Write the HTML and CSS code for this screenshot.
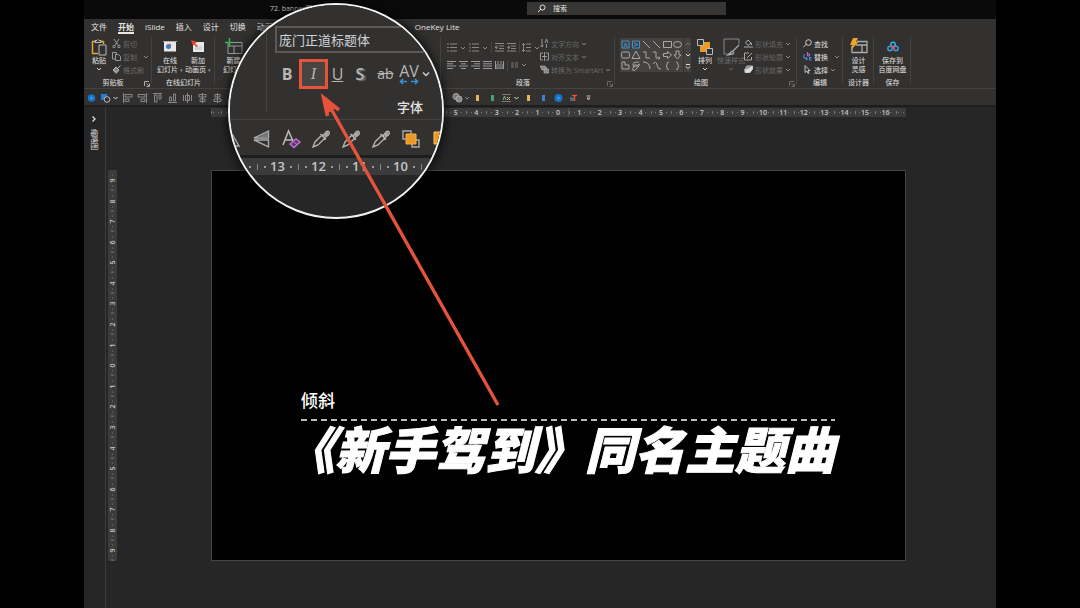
FILE: index.html
```html
<!DOCTYPE html>
<html lang="zh-CN">
<head>
    <meta charset="UTF-8">
    <title>72. banner图</title>
    <link rel="stylesheet" href="styles.css">
</head>
<body>
    <svg class="sprite" aria-hidden="true">
        <symbol id="chev" viewBox="0 0 6 4"><path d="M1 1l2 2 2-2" fill="none" stroke="currentColor"/></symbol>
        <symbol id="launch" viewBox="0 0 6 6"><path d="M.5 5V.5H5M2.500 2.500l2.500 2.500M5.500 2.500v3h-3" fill="none" stroke="currentColor" stroke-width=".8"/></symbol>
        <symbol id="pipette" viewBox="0 0 20 20"><path d="M2 18l2-5 7-7 3 3-7 7zM9.500 5l5.500 5.500M12 7l3-4q2-1.500 3 0t-.5 3L14 8.500" fill="none" stroke="#b4b2b0" stroke-width="1.400"/><path d="M13 6l3-3 2 1-3 4z" fill="#aaa"/></symbol>
        <symbol id="arrange" viewBox="0 0 20 20"><path d="M2 2h8v8H2zM11 11h7v7h-7z" fill="none" stroke="#aaa" stroke-width="1.400"/><path d="M5 5h10v10H5z" fill="#eb9a26" stroke="#f5b04a"/></symbol>
    </svg>

    <div class="app">
        <header class="titlebar">
            <span class="doc-name">72. banner图</span>
            <label class="search">
                <svg width="9" height="9" viewBox="0 0 9 9"><path d="M1 8l3-3" stroke="#ddd"/><circle cx="5.500" cy="3.500" r="2.500" fill="none" stroke="#ddd"/></svg>
                <input type="text" placeholder="搜索" aria-label="搜索">
            </label>
        </header>

        <nav class="tabs">
            <a href="#">文件</a>
            <a href="#" class="active">开始</a>
            <a href="#">iSlide</a>
            <a href="#">插入</a>
            <a href="#">设计</a>
            <a href="#">切换</a>
            <a href="#">动画</a>
            <a href="#" class="tab-onekey">OneKey Lite</a>
        </nav>

        <div class="ribbon">
            <section class="group g-clipboard">
                <div class="tools">
                    <button class="big">
                        <svg width="16" height="18" viewBox="0 0 16 18"><path d="M7 15.500H1.500v-12H5M9 3.500h3.500V6" fill="none" stroke="#e5a23b" stroke-width="1.500"/><path d="M4 4.500v-2h2q1-2 2 0h2v2z" fill="none" stroke="#bbb"/><path d="M8 7h7v10H8z" fill="#323130" stroke="#bbb"/></svg>
                        <span>粘贴</span>
                        <svg class="chev"><use href="#chev"/></svg>
                    </button>
                    <div class="stack">
                        <button class="small dim"><svg width="9" height="9" viewBox="0 0 9 9"><path d="M2 0l4 6M7 0L3 6" stroke="#999"/><circle cx="2" cy="7.500" r="1.200" fill="none" stroke="#999"/><circle cx="7" cy="7.500" r="1.200" fill="none" stroke="#999"/></svg>剪切</button>
                        <button class="small dim"><svg width="9" height="9" viewBox="0 0 9 9"><path d="M3 7H.5V.5h4V2M3.500 2.500h3l2 2v4h-5z" fill="none" stroke="#999"/></svg>复制<svg class="chev push"><use href="#chev"/></svg></button>
                        <button class="small dim"><svg width="9" height="9" viewBox="0 0 9 9"><path d="M8.500.5L6 3M4 2l3 3-2 2.500L1 5z" fill="#888" stroke="#bbb"/><path d="M1 5l3 3.500 1-1" fill="none" stroke="#aaa"/></svg>格式刷</button>
                    </div>
                </div>
                <h2 class="has-launch">剪贴板<svg class="launch bright"><use href="#launch"/></svg></h2>
            </section>

            <section class="group g-online">
                <div class="tools">
                    <button class="big">
                        <svg width="14" height="18" viewBox="0 0 14 18"><path d="M1 3.500h12v10H1z" fill="#e8e8e8"/><path d="M0 3.500h14" stroke="#aaa"/><circle cx="5.500" cy="8.500" r="2.500" fill="#2f7cd0"/><path d="M6 8V5.500Q8.500 6 8.500 8z" fill="#e5533a"/></svg>
                        <span>在线<br>幻灯片 <i>▾</i></span>
                    </button>
                    <button class="big">
                        <svg width="14" height="18" viewBox="0 0 14 18"><path d="M2 4h11v10H2z" fill="#e8e8e8"/><path d="M4 9h7M4 11h7" stroke="#bbb"/><path d="M0 2l6 2-2 1.500L7 8 5.500 9 3 6.500 2 8z" fill="#e5432e"/></svg>
                        <span>新加<br>动画页 <i>▾</i></span>
                    </button>
                </div>
                <h2>在线幻灯片</h2>
            </section>

            <section class="group g-slides">
                <div class="tools">
                    <button class="big">
                        <svg width="18" height="18" viewBox="0 0 18 18"><path d="M3 4.500h14v11H3zM3 8h14M9 8v7" fill="none" stroke="#999"/><path d="M4.500 0v9M0 4.500h9" stroke="#3bb45a" stroke-width="1.400"/></svg>
                        <span>新建<br>幻灯片</span>
                    </button>
                </div>
            </section>

            <section class="group g-font"></section>

            <section class="group g-para">
                <div class="tools">
                    <div class="para">
                        <div class="row">
                            <svg width="10" height="9" viewBox="0 0 10 9"><path d="M0 1h2M0 4.500h2M0 8h2M3 1h7M3 4.500h7M3 8h7" stroke="#8a8886"/></svg>
                            <svg class="chev"><use href="#chev"/></svg>
                            <svg width="10" height="9" viewBox="0 0 10 9"><path d="M1 0v2M1 3.500v2M1 7v2M3 1h7M3 4.500h7M3 8h7" stroke="#8a8886"/></svg>
                            <svg class="chev"><use href="#chev"/></svg>
                            <i class="bar"></i>
                            <svg width="9" height="9" viewBox="0 0 9 9"><path d="M0 .5h9M4 3h5M4 5.500h5M0 8h9M3 4.300H0M2 2.500L0 4.300l2 1.700" fill="none" stroke="#8a8886"/></svg>
                            <svg width="9" height="9" viewBox="0 0 9 9"><path d="M0 .5h9M4 3h5M4 5.500h5M0 8h9M3 4.300H0M1 2.500l2 1.800L1 6" fill="none" stroke="#8a8886"/></svg>
                            <i class="bar"></i>
                            <svg width="9" height="9" viewBox="0 0 9 9"><path d="M1.500 0v9M0 2L1.500.5 3 2M0 7l1.500 1.500L3 7M4 1h5M4 4.500h5M4 8h5" fill="none" stroke="#8a8886"/></svg>
                            <svg class="chev"><use href="#chev"/></svg>
                        </div>
                        <div class="row aligns">
                            <svg width="9" height="8" viewBox="0 0 9 8"><path d="M0 .5h9M0 2.800h6M0 5h9M0 7.500h6" stroke="#999"/></svg>
                            <svg width="9" height="8" viewBox="0 0 9 8"><path d="M0 .5h9M2 2.800h5M0 5h9M2 7.500h5" stroke="#999"/></svg>
                            <svg width="9" height="8" viewBox="0 0 9 8"><path d="M0 .5h9M3 2.800h6M0 5h9M3 7.500h6" stroke="#999"/></svg>
                            <svg width="9" height="8" viewBox="0 0 9 8"><path d="M0 .5h9M0 2.800h9M0 5h9M0 7.500h9" stroke="#999"/></svg>
                            <svg width="9" height="8" viewBox="0 0 9 8"><path d="M.5 0v8M8.500 0v8M3 0v3M6 0v3M0 4h9M0 6h9M0 7.800h9" stroke="#999"/></svg>
                            <i class="bar"></i>
                            <svg width="7" height="8" viewBox="0 0 7 8"><path d="M0 2h3M4 2h3M0 4h3M4 4h3M0 6h3M4 6h3" stroke="#777"/></svg>
                            <svg class="chev"><use href="#chev"/></svg>
                        </div>
                    </div>
                    <div class="stack">
                        <button class="small dim"><svg width="9" height="9" viewBox="0 0 9 9"><path d="M2 0v8M.5 6.500L2 8l1.500-1.500M5 4l1.500-4L8 4M6.500 5v4" fill="none" stroke="#999"/></svg>文字方向<svg class="chev"><use href="#chev"/></svg></button>
                        <button class="small dim"><svg width="9" height="9" viewBox="0 0 9 9"><path d="M3 1H.5v7H3M6 1h2.500v7H6M4.500 0v9M2 4.500h5" fill="none" stroke="#999"/></svg>对齐文本<svg class="chev"><use href="#chev"/></svg></button>
                        <button class="small dim"><svg width="9" height="9" viewBox="0 0 9 9"><path d="M0 1h5l2 2-2 2H2zM4 4h5v4H4z" fill="#888" stroke="#aaa" stroke-width=".7"/></svg>转换为 SmartArt<svg class="chev"><use href="#chev"/></svg></button>
                    </div>
                </div>
                <h2 class="has-launch">段落<svg class="launch"><use href="#launch"/></svg></h2>
            </section>

            <section class="group g-draw">
                <div class="tools">
                    <div class="gallery">
                        <svg width="63" height="33" viewBox="0 0 63 33" fill="none" stroke="#b5b3b1" stroke-width=".9">
                            <g stroke="#3f9bdc"><path d="M2 3h7v7H2zM12.500 3h7v7h-7zM4 9l1.500-4L7 9M14 5l4 1.500L14 8"/></g>
                            <path d="M23 3l7 7M33 3l7 7M43.500 3.500h8v6h-8z"/><ellipse cx="57.500" cy="6.500" rx="4" ry="3"/>
                            <rect x="1.500" y="14" width="8" height="6" rx="1.500"/>
                            <path d="M16 13l4 7.500h-8zM23 14h3v6h4M33 14h3v6h4M38.500 18.500L40 20l-1.500 1.500M43.500 15.500h4v-2l4 3.500-4 3.500v-2h-4zM56 13h3v4h2l-3.500 4-3.500-4h2z"/>
                            <path d="M2 24h3v3h4v4H2zM19 24q-7 0-6 3t5 0-1 3-4 0 6-1M23 24q7 0 7 7M33 26q3-4 4 1t4 4M49 24q-2 0-2 2t-1 2q1 0 1 2t2 1.500M56 24q2 0 2 2t1 2q-1 0-1 2t-2 1.500"/>
                        </svg>
                        <div class="scroll">
                            <svg width="6" height="4" viewBox="0 0 6 4"><path d="M1 3l2-2 2 2" fill="none" stroke="#777"/></svg>
                            <svg width="6" height="4"><use href="#chev"/></svg>
                            <svg width="6" height="5" viewBox="0 0 6 5"><path d="M1 .5h4M1 2.500l2 2 2-2" fill="none" stroke="#ddd"/></svg>
                        </div>
                    </div>
                    <button class="big">
                        <svg width="16" height="18" viewBox="0 0 16 18"><path d="M3 4h10v10H3z" fill="#eb9a26"/><path d="M.5 1.500h6v6h-6zM9.500 10.500h6v6h-6z" fill="#323130" stroke="#bbb"/></svg>
                        <span>排列</span>
                        <svg class="chev"><use href="#chev"/></svg>
                    </button>
                    <button class="big dim">
                        <svg width="17" height="18" viewBox="0 0 17 18"><path d="M9 16H1V1h15v5" fill="none" stroke="#888"/><path d="M16 7l-7 7M9 13l-4 4 5-1 1-2" fill="none" stroke="#aaa" stroke-width="1.300"/></svg>
                        <span>快速样式</span>
                        <svg class="chev"><use href="#chev"/></svg>
                    </button>
                    <div class="stack">
                        <button class="small dim"><svg width="9" height="9" viewBox="0 0 9 9"><path d="M4 1l3 3-3 2.500L1.500 4zM7.500 4v2M0 8h9" fill="none" stroke="#aaa"/></svg>形状填充<svg class="chev"><use href="#chev"/></svg></button>
                        <button class="small dim"><svg width="9" height="9" viewBox="0 0 9 9"><path d="M5 1H.5v7h7V5M3 6l5-5" fill="none" stroke="#aaa"/></svg>形状轮廓<svg class="chev"><use href="#chev"/></svg></button>
                        <button class="small dim"><svg width="9" height="9" viewBox="0 0 9 9"><path d="M3 1h5.500L6 5H.500z" fill="#888" stroke="#bbb"/><path d="M1 5v2.500h5L8.500 4V1" fill="#ddd" stroke="#ccc"/></svg>形状效果<svg class="chev"><use href="#chev"/></svg></button>
                    </div>
                </div>
                <h2 class="has-launch">绘图<svg class="launch"><use href="#launch"/></svg></h2>
            </section>

            <section class="group g-edit">
                <div class="tools">
                    <div class="stack">
                        <button class="small"><svg width="9" height="9" viewBox="0 0 9 9"><path d="M0 8.500L3.500 5" stroke="#ccc"/><circle cx="5.500" cy="3.500" r="2.800" fill="none" stroke="#ccc"/></svg>查找</button>
                        <button class="small"><svg width="9" height="9" viewBox="0 0 9 9"><path d="M4.500 0v4h2V2h-2" fill="none" stroke="#c261cf"/><path d="M2 2Q0 3 1 6l3 1M3 5l1.500 2L3 8.500M8.500 5.500h-2v2.500h2" fill="none" stroke="#3f9bdc"/></svg>替换<svg class="chev push"><use href="#chev"/></svg></button>
                        <button class="small"><svg width="9" height="9" viewBox="0 0 9 9"><path d="M2 .5v7l2-1.500 1 2.500 1-.5-1-2.500h2z" fill="none" stroke="#ccc" stroke-width=".9"/></svg>选择<svg class="chev"><use href="#chev"/></svg></button>
                    </div>
                </div>
                <h2>编辑</h2>
            </section>

            <section class="group g-designer">
                <div class="tools">
                    <button class="big">
                        <svg width="18" height="18" viewBox="0 0 18 18"><path d="M7 3.500h10v11H2V8M6 7h11M12 7v7" fill="none" stroke="#aaa" stroke-width="1.300"/><path d="M3 0h5L6 4h2.500L1 12l1.500-5H0z" fill="#f0a52c"/></svg>
                        <span>设计<br>灵感</span>
                    </button>
                </div>
                <h2>设计器</h2>
            </section>

            <section class="group g-save">
                <div class="tools">
                    <button class="big">
                        <svg width="12" height="18" viewBox="0 0 12 18"><g fill="none" stroke-width="1.500"><circle cx="3" cy="10.500" r="2.200" stroke="#29a3e8"/><circle cx="9" cy="10.500" r="2.200" stroke="#29a3e8"/><circle cx="6" cy="6.500" r="2.200" stroke="#2fb5e8"/><path d="M4 8l4 4M8 8l-2 2" stroke="#e2465a"/></g></svg>
                        <span>保存到<br>百度网盘</span>
                    </button>
                </div>
                <h2>保存</h2>
            </section>
        </div>

        <div class="quickbar">
            <svg width="15" height="10" viewBox="0 0 15 10"><circle cx="7.500" cy="5" r="3.800" fill="#1273c9"/><circle cx="7.500" cy="5" r="1.500" fill="#3f97e2"/></svg>
            <svg width="13" height="10" viewBox="0 0 13 10"><path d="M2 1h6v6H2z" fill="#1e7fd6"/><circle cx="8" cy="6.500" r="2.800" fill="#323130" stroke="#bbb"/></svg>
            <svg class="chev bright"><use href="#chev"/></svg>
            <svg width="15" height="10" viewBox="0 0 15 10"><path d="M3.500 0v10M5 1.500h7v2.500H5zM5 6h4v2.500H5z" fill="none" stroke="#888"/></svg>
            <svg width="15" height="10" viewBox="0 0 15 10"><path d="M11.500 0v10M3 1.500h7v2.500H3zM6 6h4v2.500H6z" fill="none" stroke="#888"/></svg>
            <svg width="15" height="10" viewBox="0 0 15 10"><path d="M3 .5h9M4.500 2H7v7H4.500zM9 2h2v4H9z" fill="none" stroke="#888"/></svg>
            <svg width="15" height="10" viewBox="0 0 15 10"><path d="M3 9.500h9M4.500 4h2v4h-2zM8.500 1h2v7h-2z" fill="none" stroke="#888"/></svg>
            <svg width="15" height="10" viewBox="0 0 15 10"><path d="M3.500 2v6M11.500 2v6M5.500 2.500h4v5h-4zM7.500 0v10" fill="none" stroke="#888"/></svg>
            <svg width="15" height="10" viewBox="0 0 15 10"><path d="M7.500 0v10M4 1.500h7V4H4zM5 6h5v2.500H5z" fill="none" stroke="#888"/></svg>
            <svg width="15" height="10" viewBox="0 0 15 10"><path d="M7.500 0v10M5 1.500h5V4H5zM4 6h7v2.500H4z" fill="none" stroke="#888"/></svg>
            <svg class="after-lens" width="13" height="10" viewBox="0 0 13 10"><circle cx="5" cy="3.500" r="3" fill="#777" stroke="#aaa"/><circle cx="8" cy="6" r="3" fill="#888" stroke="#aaa"/></svg>
            <svg class="chev"><use href="#chev"/></svg>
            <i class="chip"></i>
            <i class="chip green"></i>
            <svg width="13" height="10" viewBox="0 0 13 10"><path d="M2 1.500h9M2 8.500h9" stroke="#777"/><path d="M3 7l1.500-4L6 7" fill="none" stroke="#6ab58a"/><path d="M7 4l3 3M10 4L7 7" stroke="#e3b85c"/></svg>
            <svg class="chev bright"><use href="#chev"/></svg>
            <i class="chip"></i>
            <i class="chip blue"></i>
            <svg width="15" height="10" viewBox="0 0 15 10"><circle cx="7.500" cy="5" r="4" fill="#1273c9"/><circle cx="7.500" cy="5" r="1.500" fill="#3f97e2"/></svg>
            <svg width="15" height="10" viewBox="0 0 15 10"><path d="M5 4v4M7 5v3" stroke="#7a9"/><path d="M6 2.500h5M8.500 2.500V8" stroke="#e0503c" stroke-width="1.500"/></svg>
            <svg width="15" height="10" viewBox="0 0 15 10"><path d="M5.500 3h4M6 5l1.500 2L9 5z" fill="none" stroke="#bbb"/></svg>
        </div>

        <main class="workspace">
            <aside class="thumbs">
                <svg width="6" height="8" viewBox="0 0 6 8"><path d="M1.500 1.500L4 4 1.500 6.500" fill="none" stroke="#ddd" stroke-width="1.300"/></svg>
                <span>缩略图</span>
            </aside>
            <div class="editor">
                <!-- the stretch under the lens has ticks only -->
                <div class="ruler-x">
                    <b></b><b></b><b></b><b></b><b></b><b></b><b></b><b></b><b></b><b></b><b></b><b></b><b>5</b><b>4</b><b>3</b><b>2</b><b>1</b><b class="zero">0</b><b>1</b><b>2</b><b>3</b><b>4</b><b>5</b><b>6</b><b>7</b><b>8</b><b>9</b><b>10</b><b>11</b><b>12</b><b>13</b><b>14</b><b>15</b><b>16</b><b></b>
                </div>
                <div class="ruler-y">
                    <b>9</b><b>8</b><b>7</b><b>6</b><b>5</b><b>4</b><b>3</b><b>2</b><b>1</b><b class="zero">0</b><b>1</b><b>2</b><b>3</b><b>4</b><b>5</b><b>6</b><b>7</b><b>8</b><b>9</b>
                </div>
                <article class="slide">
                    <p>倾斜</p>
                    <div class="dashes"></div>
                    <h1>《新手驾到》同名主题曲</h1>
                </article>
            </div>
        </main>

        <!-- magnified part of the font group -->
        <div class="lens">
            <div class="lens-font">
                <input class="font-name" type="text" value="庞门正道标题体" aria-label="字体名称">
                <div class="lens-buttons">
                    <button class="fb-b">B</button>
                    <button class="fb-i">I</button>
                    <button class="fb-u">U</button>
                    <button class="fb-s">S</button>
                    <button class="fb-ab">ab</button>
                    <button class="fb-av">AV<svg width="20" height="7" viewBox="0 0 20 7"><path d="M1 3.500h7M12 3.500h7M4 1L1.500 3.500 4 6M16 1l2.500 2.500L16 6" fill="none" stroke="#3492d8" stroke-width="1.600"/></svg></button>
                    <svg width="8" height="6" viewBox="0 0 8 6"><path d="M1 1.500l3 3 3-3" fill="none" stroke="#ccc" stroke-width="1.500"/></svg>
                </div>
                <div class="lens-label">字体</div>
            </div>
            <div class="lens-icons">
                <svg viewBox="0 0 20 20"><path d="M10 3l8 14h-8z" fill="none" stroke="#aaa" stroke-width="1.400"/></svg>
                <svg viewBox="0 0 20 20"><path d="M17.500 2v7H3zM17.500 11v7L3 11z" fill="none" stroke="#aaa" stroke-width="1.400"/><path d="M6 7.500l11-4v5z" fill="#777"/></svg>
                <svg viewBox="0 0 20 20"><path d="M2 16L7.500 2 12 12M4 11h7" fill="none" stroke="#bbb" stroke-width="1.500"/><path d="M9 15l6-5 4 3-6 5.500z" fill="#5e3a68" stroke="#c46fd8" stroke-width="1.400"/><path d="M12 12.500l4 3" stroke="#c46fd8"/></svg>
                <svg><use href="#pipette"/></svg>
                <svg><use href="#pipette"/></svg>
                <svg><use href="#pipette"/></svg>
                <svg><use href="#arrange"/></svg>
                <svg viewBox="0 0 20 20"><path d="M3 3h14v12H3z" fill="#eb9a26" stroke="#ffc25e"/></svg>
            </div>
            <div class="lens-ruler"><b></b><b>13</b><b>12</b><b>11</b><b>10</b><b></b></div>
        </div>
        <svg class="arrow" width="184" height="320" viewBox="0 0 184 320"><path d="M8 7L181 314" stroke="#e5533a" stroke-width="3.400"/><path d="M10.500 25L6.500 6.500 22 19" fill="none" stroke="#e5533a" stroke-width="3.600"/><path d="M5.500 4L11.500 22 20 16z" fill="#e5533a"/></svg>
    </div>
</body>
</html>
```
FILE: styles.css
```css
:root {
    --ribbon: #323130;
    --work: #262626;
    --ruler: #3b3b3b;
    --line: #444342;
    --text: #e4e2e0;
    --dim: #6b6967;
    --accent: #e5533a;
}

* {
    box-sizing: border-box;
}

body {
    margin: 0;
    background: #000;
    color: var(--text);
    font-family: "Open Sans", "Noto Sans CJK SC", sans-serif;
    font-size: 7px;
}

svg {
    flex: none;
}

button {
    padding: 0;
    border: 0;
    background: none;
    color: inherit;
    font: inherit;
}

h1, h2, p {
    margin: 0;
}

.sprite {
    display: none;
}

.app {
    position: relative;
    display: flex;
    flex-direction: column;
    min-height: 100vh;
    margin: 0 84px;
    background: var(--ribbon);
}

.titlebar {
    display: flex;
    align-items: center;
    height: 19px;
    padding: 0 270px 2px 186px;
    background: #0a0a0a;
}

.doc-name {
    width: 257px;
    line-height: 12px;
    color: #c8c6c4;
}

.search {
    display: flex;
    flex: 1;
    align-items: center;
    gap: 7px;
    height: 13px;
    padding-left: 10px;
    background: #373635;
}

.search input {
    width: 100px;
    padding: 0;
    border: 0;
    background: none;
    font: inherit;
}

.search input::placeholder {
    color: var(--text);
}

.tabs {
    display: flex;
    gap: 11px;
    height: 17px;
    padding: 1px 0 0 7px;
}

.tabs a {
    height: 14px;
    color: var(--text);
    font-size: 8px;
    line-height: 13px;
    text-decoration: none;
    white-space: nowrap;
}

.tabs .active {
    border-bottom: 2px solid #e8e8e8;
    font-weight: bold;
}

.tabs .tab-onekey {
    margin-left: 131px;
}

/* ribbon */
.ribbon {
    display: flex;
    height: 53px;
    border-bottom: 1px solid var(--line);
}

.group {
    display: flex;
    flex-direction: column;
    flex: none;
    height: 52px;
    padding-top: 1px;
    background: linear-gradient(var(--line), var(--line)) right 1px / 1px 47px no-repeat;
}

.g-clipboard { width: 68px; }
.g-online { width: 63px; }
.g-slides { width: 52px; }
.g-font { width: 174px; }
.g-para { width: 174px; }
.g-draw { width: 182px; }
.g-edit { width: 46px; }
.g-designer { width: 31px; }
.g-save { width: 37px; }

.g-clipboard .tools { padding-left: 7px; gap: 5px; }
.g-online .tools { padding-left: 4px; }
.g-online .big { width: 28px; }
.g-slides .tools { padding-left: 8px; }
.g-para .tools { padding-left: 6px; }
.g-draw .tools { padding-left: 5px; }
.g-edit .tools { padding-left: 6px; }
.g-designer .tools,
.g-save .tools { justify-content: center; }

.tools {
    display: flex;
    height: 41px;
}

.group h2 {
    position: relative;
    font-size: 7px;
    font-weight: normal;
    line-height: 10px;
    text-align: center;
}

.group .has-launch {
    padding-right: 10px;
}

.chev {
    width: 6px;
    height: 4px;
    color: #8a8886;
}

.chev.bright {
    width: 7px;
    margin-right: 1px;
    color: #ddd;
}

.launch {
    position: absolute;
    right: 2px;
    bottom: 1px;
    width: 6px;
    height: 6px;
    color: #777;
}

.launch.bright {
    color: #ccc;
}

.big {
    display: flex;
    flex-direction: column;
    align-items: center;
    padding-top: 1px;
    line-height: 9px;
    white-space: nowrap;
}

.big .chev {
    margin-top: 2px;
    color: #ccc;
}

.big i {
    color: #999;
    font-size: 5px;
    font-style: normal;
}

.big.dim,
.small.dim {
    color: var(--dim);
}

.big.dim .chev {
    color: var(--dim);
}

.g-draw .big {
    width: 26px;
}

.small {
    display: flex;
    align-items: center;
    gap: 2px;
    height: 13px;
    white-space: nowrap;
}

.small .chev.push {
    margin-left: 4px;
}

.para {
    width: 93px;
    padding-top: 5px;
}

.row {
    display: flex;
    align-items: center;
    gap: 3px;
    height: 11px;
}

.aligns {
    height: 24px;
}

.bar {
    width: 1px;
    height: 11px;
    background: var(--line);
}

.gallery {
    display: flex;
    height: 34px;
    margin: 1px 1px 0 0;
    background: #434241;
}

.scroll {
    display: flex;
    flex-direction: column;
    align-items: center;
    justify-content: space-around;
    width: 8px;
    border-left: 1px solid #333;
    color: #ddd;
}

/* quick access bar */
.quickbar {
    display: flex;
    align-items: center;
    height: 18px;
    padding-top: 1px;
    border-bottom: 2px solid #1e1e1e;
}

.after-lens {
    margin-left: 226px;
}

.chip {
    width: 15px;
    height: 6px;
    background: linear-gradient(#e3b85c, #e3b85c) center / 3px 6px no-repeat;
}

.chip.green {
    background-image: linear-gradient(#4a9f7c, #4a9f7c);
}

.chip.blue {
    background-image: linear-gradient(#3f7fd6, #3f7fd6);
}

/* work area */
.workspace {
    display: flex;
    flex: 1;
    background: var(--work);
}

.thumbs {
    display: flex;
    flex: none;
    flex-direction: column;
    align-items: center;
    gap: 6px;
    width: 22px;
    padding: 8px 2px 0 0;
    border-right: 1px solid #3c3c3c;
}

.thumbs span {
    writing-mode: vertical-rl;
    text-orientation: sideways;
    line-height: 8px;
}

.editor {
    display: grid;
    flex: 1;
    min-width: 0;
    grid-template-columns: 9px minmax(0, 1fr);
    grid-template-rows: 9px auto;
    gap: 53px 94px;
    align-content: start;
    padding: 1px 90px 0 2px;
}

.ruler-x,
.ruler-y {
    display: flex;
    background: var(--ruler);
    color: #c8c6c4;
    font-size: 7px;
    line-height: 9px;
}

.ruler-x {
    grid-column: 2;
}

.ruler-y {
    flex-direction: column;
}

.ruler-x b,
.ruler-y b,
.lens-ruler b {
    flex: 1 1 0;
    min-width: 0;
    text-align: center;
    font-weight: 600;
    background:
        linear-gradient(#777, #777) 0 50% / 1px 3px,
        linear-gradient(#777, #777) 24% 50% / 1px 1px,
        linear-gradient(#777, #777) 78% 50% / 1px 1px;
    background-repeat: no-repeat;
}

.ruler-x b:first-child,
.ruler-x b:last-child {
    flex-grow: 0.5;
}

.ruler-x .zero {
    border-right: 1px solid #555;
}

.ruler-y b {
    display: flex;
    align-items: center;
    justify-content: center;
    writing-mode: vertical-rl;
    min-height: 0;
    transform: rotate(180deg);
    background:
        linear-gradient(#777, #777) 50% 0 / 3px 1px,
        linear-gradient(#777, #777) 50% 22% / 1px 1px,
        linear-gradient(#777, #777) 50% 78% / 1px 1px;
    background-repeat: no-repeat;
}

.slide {
    min-width: 0;
    aspect-ratio: 16 / 9;
    padding: 218px 70px 0 89px;
    border: 1px solid #444;
    background: #000;
    color: #fff;
}

.slide p {
    font-size: 17px;
    font-weight: 500;
    line-height: 24px;
}

.dashes {
    height: 2px;
    margin: 6px 0 4px;
    background: repeating-linear-gradient(90deg, #bbb 0 6px, transparent 6px 10px);
}

.slide h1 {
    margin-left: -16px;
    font-size: 50px;
    font-style: italic;
    font-weight: 900;
    line-height: 50px;
    white-space: nowrap;
    -webkit-text-stroke: 1px #fff;
}

/* lens lies over the ribbon and the slide */
.lens {
    position: absolute;
    top: 3px;
    left: 144px;
    width: 216px;
    height: 216px;
    overflow: hidden;
    border: 2px solid #f2f2f2;
    border-radius: 50%;
    background: var(--work);
    box-shadow: 0 0 10px 2px rgba(0, 0, 0, 0.7);
}

.lens-font {
    height: 114px;
    padding: 21px 0 0 45px;
    background: linear-gradient(var(--line), var(--line)) 36px 0 / 1px 106px no-repeat, var(--ribbon);
}

.font-name {
    width: 100%;
    height: 27px;
    padding: 0 2px;
    border: 2px solid #5c5a58;
    background: var(--ribbon);
    color: #cfd3d8;
    font: 13px "Noto Sans CJK SC", sans-serif;
}

.lens-buttons {
    display: flex;
    align-items: center;
    margin-top: 6px;
    color: #b8b6b4;
    font-size: 16px;
    line-height: 18px;
}

.fb-b { width: 24px; font-weight: bold; }
.fb-u { width: 19px; text-decoration: underline; }
.fb-s { width: 26px; font-weight: 600; text-shadow: 2px 1px 1px #777; }

.fb-i {
    width: 29px;
    height: 30px;
    border: 3px solid var(--accent);
    background: #464544;
    font-family: "Liberation Serif", serif;
    font-style: italic;
}

.fb-ab {
    width: 25px;
    font-size: 14px;
    text-decoration: line-through;
}

.fb-av {
    display: flex;
    flex-direction: column;
    align-items: center;
    width: 22px;
    line-height: 14px;
}

.lens-buttons > svg {
    margin-left: 2px;
}

.lens-label {
    margin: 9px 0 0 122px;
    font-size: 13px;
    font-weight: 500;
    line-height: 18px;
}

.lens-icons {
    display: flex;
    height: 39px;
    margin-left: -14px;
    border-top: 1px solid var(--line);
    border-bottom: 3px solid #1e1e1e;
    background: var(--ribbon);
}

.lens-icons svg {
    width: 30px;
    height: 20px;
    margin-top: 9px;
}

.lens-ruler {
    display: flex;
    height: 17px;
    margin-left: -14px;
    background: var(--ruler);
    color: #c8c6c4;
    font-size: 13px;
    line-height: 17px;
}

.lens-ruler b {
    flex: 0 0 41px;
    background:
        linear-gradient(#888, #888) 0 50% / 1px 6px,
        linear-gradient(#999, #999) 18% 50% / 2px 2px,
        linear-gradient(#999, #999) 84% 50% / 2px 2px;
    background-repeat: no-repeat;
}

.arrow {
    position: absolute;
    top: 91px;
    left: 233px;
}
```
